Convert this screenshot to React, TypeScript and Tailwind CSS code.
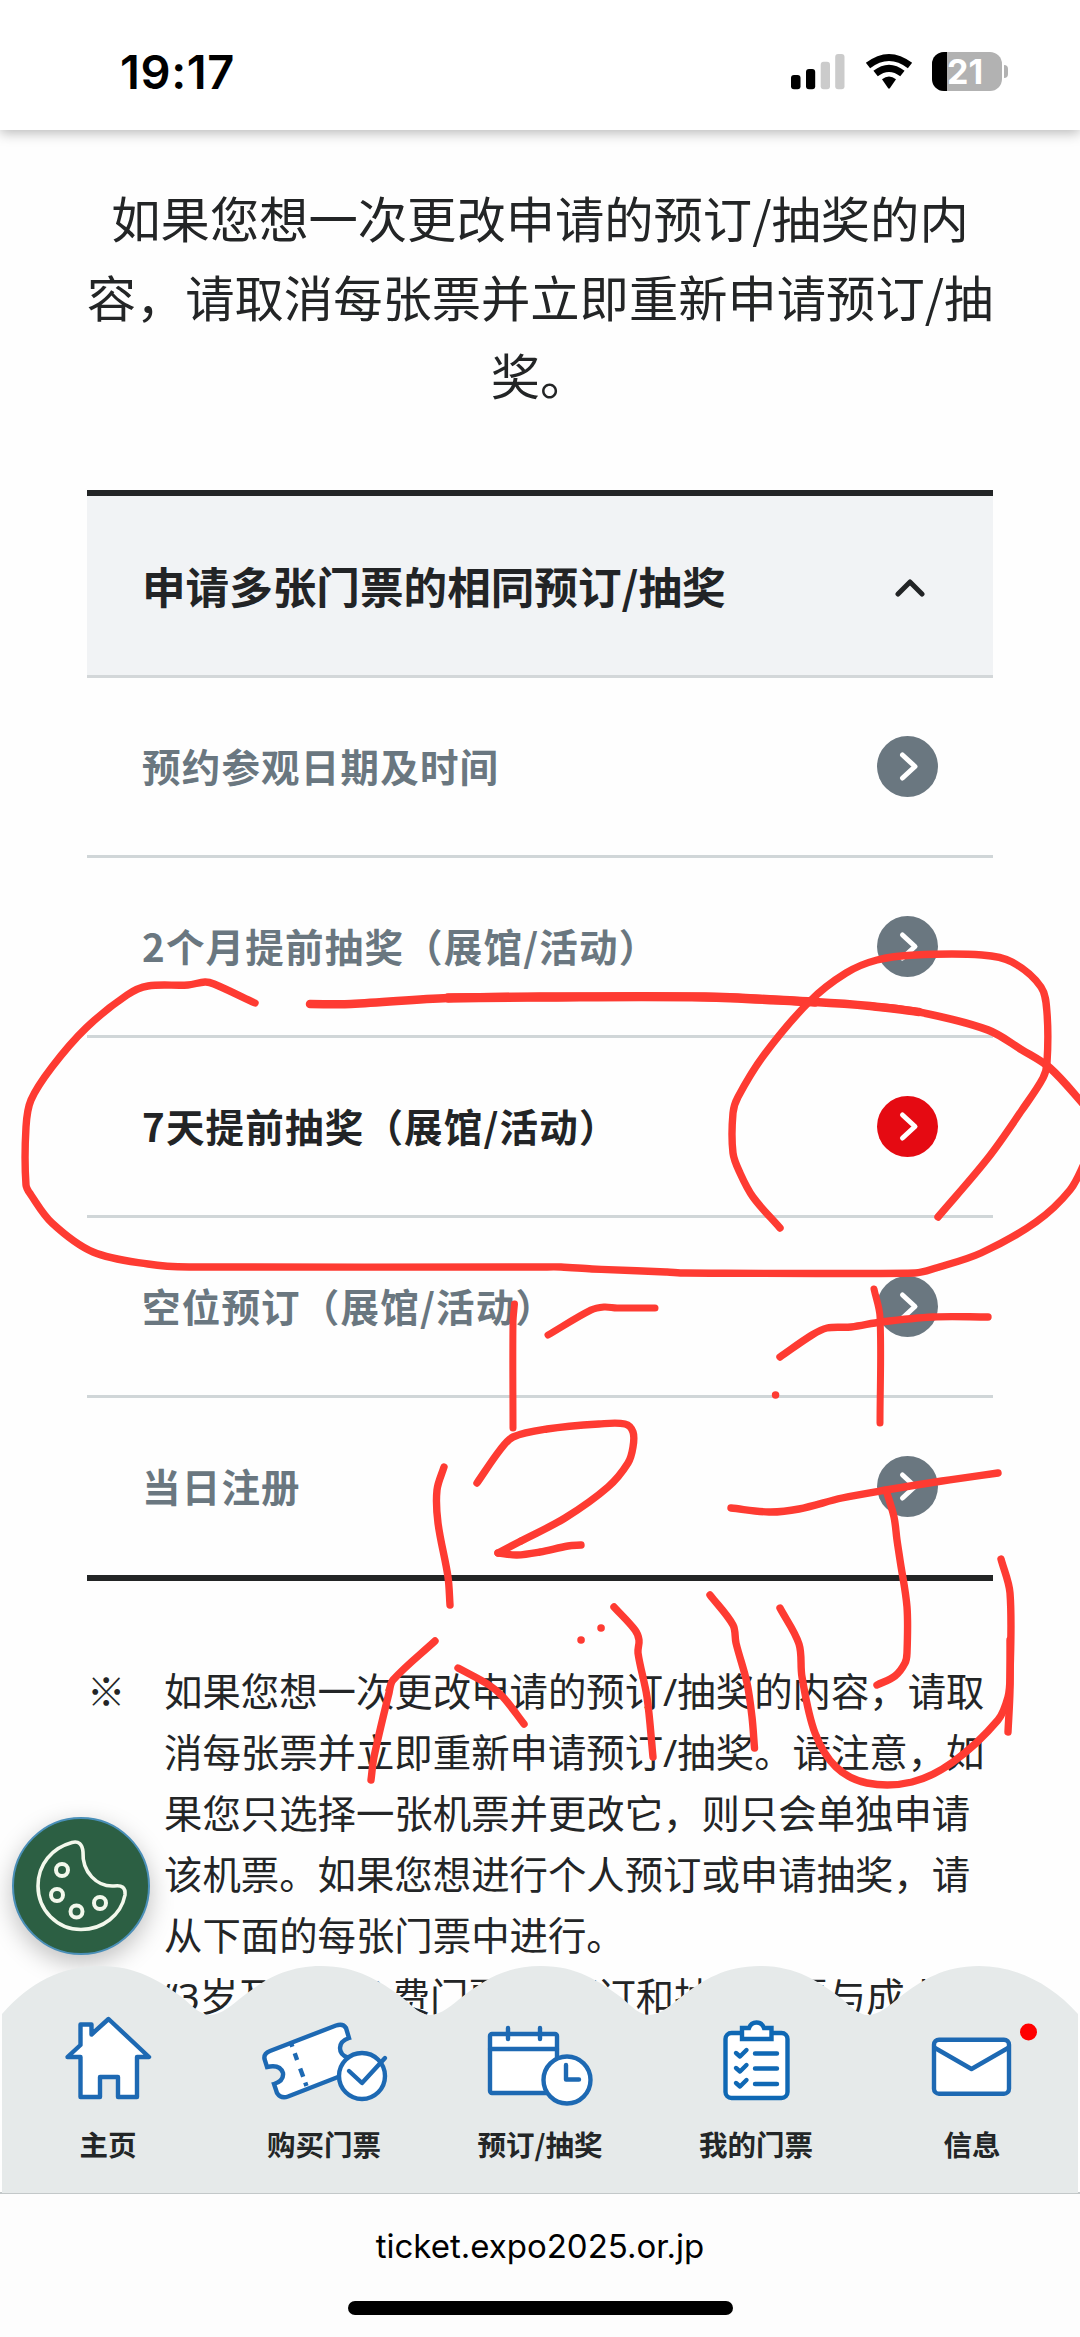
import React from 'react'

type Point = [number, number]

interface Stroke {
  width: number
  points: Point[]
}

interface MenuRow {
  label: string
  active?: boolean
}

const INTRO_LINES = [
  '如果您想一次更改申请的预订/抽奖的内',
  '容，请取消每张票并立即重新申请预订/抽',
  '奖。',
]

const MENU_ROWS: MenuRow[] = [
  { label: '预约参观日期及时间' },
  { label: '2个月提前抽奖（展馆/活动）' },
  { label: '7天提前抽奖（展馆/活动）', active: true },
  { label: '空位预订（展馆/活动）' },
  { label: '当日注册' },
]

const NOTE_LINES = [
  '如果您想一次更改申请的预订/抽奖的内容，请取',
  '消每张票并立即重新申请预订/抽奖。请注意，如',
  '果您只选择一张机票并更改它，则只会单独申请',
  '该机票。如果您想进行个人预订或申请抽奖，请',
  '从下面的每张门票中进行。',
  '“3岁及以下免费门票”的预订和抽奖门票与成人',
]

// Pen strokes drawn by hand on top of the page
const STROKES: Stroke[] = [
  {
    width: 7.4,
    points: [[255, 1003], [214, 984], [205, 982], [188, 985], [148, 986], [127, 995], [86, 1028], [52, 1067], [31, 1100], [26, 1127], [26, 1185], [31, 1195], [52, 1223], [93, 1252], [148, 1264], [189, 1267], [540, 1267], [561, 1267], [592, 1269], [667, 1272], [685, 1273], [915, 1273], [936, 1268], [981, 1253], [1036, 1222], [1070, 1190], [1086, 1160]],
  },
  { width: 8.5, points: [[310, 1004], [351, 1004], [448, 998], [540, 997], [705, 997], [815, 1002], [870, 1006], [919, 1012]] },
  { width: 9.3, points: [[448, 998], [540, 997], [705, 997], [815, 1002]] },
  { width: 7.8, points: [[870, 1006], [919, 1012], [988, 1030], [1022, 1050], [1050, 1068], [1086, 1107]] },
  {
    width: 7.4,
    points: [[938, 1217], [988, 1158], [1022, 1110], [1043, 1078], [1047, 1063], [1047, 1013], [1041, 987], [1012, 962], [982, 955], [915, 955], [877, 960], [846, 973], [809, 1002], [764, 1055], [738, 1097], [733, 1113], [733, 1153], [740, 1173], [753, 1197], [780, 1228]],
  },
  { width: 7, points: [[514.5, 1304], [513, 1323], [513, 1428]] },
  { width: 7, points: [[548, 1335], [591, 1310], [604, 1307], [617, 1308], [655, 1308]] },
  { width: 7, points: [[874, 1289], [880, 1317], [880, 1423]] },
  { width: 7.4, points: [[780, 1357], [812, 1335], [827, 1328], [851, 1327], [881, 1322], [933, 1317], [988, 1317]] },
  { width: 7.4, points: [[775.5, 1395], [775.6, 1395]] },
  {
    width: 7.4,
    points: [[477, 1483], [500, 1450], [513, 1437], [547, 1429], [599, 1424], [625, 1424], [633, 1432], [633, 1447], [628, 1463], [608, 1487], [565, 1518], [521, 1541]],
  },
  { width: 7.4, points: [[521, 1541], [498, 1553]] },
  { width: 7.4, points: [[498, 1553], [517, 1555], [540, 1552], [568, 1546], [581, 1545]] },
  { width: 7.4, points: [[444, 1467], [437, 1490], [438, 1523], [448, 1577], [450, 1605]] },
  { width: 7.4, points: [[731, 1508], [769, 1512], [799, 1509], [842, 1498], [886, 1490], [942, 1481], [998, 1473]] },
  { width: 7.4, points: [[886, 1490], [894, 1517], [897, 1540], [900, 1560], [907, 1607], [907, 1653], [905, 1663], [895, 1676], [877, 1685]] },
  { width: 7.4, points: [[435, 1641], [393, 1680], [389, 1693], [374, 1757], [371, 1780]] },
  { width: 7.4, points: [[458, 1668], [489, 1685], [503, 1697], [524, 1724]] },
  { width: 7.4, points: [[614, 1607], [635, 1630], [639, 1640], [638, 1653], [647, 1697], [653, 1757]] },
  { width: 7.4, points: [[710, 1595], [733, 1625], [736, 1643], [747, 1683], [752, 1717], [754.5, 1748]] },
  {
    width: 7.4,
    points: [[780, 1608], [799, 1644], [802, 1677], [815, 1733], [836, 1767], [867, 1783], [912, 1782], [953, 1762], [998, 1720], [1008, 1697], [1010, 1677], [1010, 1593], [1001, 1559]],
  },
  { width: 7.4, points: [[1010, 1640], [1010, 1690], [1008, 1732]] },
  { width: 7.5, points: [[581, 1640], [581.1, 1640]] },
  { width: 7.5, points: [[601, 1628], [601.1, 1628]] },
]

// Smooth curve through the points, written as cubic segments
const toPath = (pts: Point[]): string => {
  let d = `M${pts[0][0]} ${pts[0][1]}`
  const tangent = (i: number): Point => {
    const a = pts[Math.max(i - 1, 0)]
    const b = pts[Math.min(i + 1, pts.length - 1)]
    const len = Math.hypot(b[0] - a[0], b[1] - a[1]) || 1
    return [(b[0] - a[0]) / len, (b[1] - a[1]) / len]
  }
  for (let i = 0; i < pts.length - 1; i++) {
    const p = pts[i]
    const q = pts[i + 1]
    const h = Math.min(Math.hypot(q[0] - p[0], q[1] - p[1]) / 3, 60)
    const t0 = tangent(i)
    const t1 = tangent(i + 1)
    d += `C${p[0] + t0[0] * h} ${p[1] + t0[1] * h} ${q[0] - t1[0] * h} ${q[1] - t1[1] * h} ${q[0]} ${q[1]}`
  }
  return d
}

const StatusBar: React.FC = () => (
  <header className="relative z-10 flex h-[130px] shrink-0 items-start justify-between bg-white pl-[120px] pr-[72px] shadow-[0_3px_12px_rgba(0,0,0,0.28)]">
    <span className="mt-[44px] font-['Inter'] text-[47px] leading-[56px] font-semibold tracking-[0.6px] text-black">
      19:17
    </span>
    <div className="mt-[52px] flex items-start">
      <svg className="h-[39px] w-[54px]" viewBox="0 0 54 39">
        <rect x="0" y="23" width="9.5" height="14.3" rx="3" fill="#000" />
        <rect x="15" y="17" width="9.2" height="20.3" rx="3" fill="#000" />
        <rect x="29.7" y="9.7" width="9.3" height="27.6" rx="3" fill="#cbcbcb" />
        <rect x="44.2" y="2" width="9.3" height="35.3" rx="3" fill="#cbcbcb" />
      </svg>
      <svg className="ml-[20px] h-[39px] w-[48px]" viewBox="0 0 48 39">
        <g fill="none" stroke="#000" strokeWidth="7">
          <path d="M3 13.6Q24 -2.6 45 13.6" />
          <path d="M10.6 21.6Q24 11 37.4 21.6" />
        </g>
        <path d="M17 27.3Q24 21.6 31 27.3L25 36Q24 37.4 23 36Z" fill="#000" />
      </svg>
      <div className="ml-[19px] flex items-center">
        <div className="flex h-[39px] w-[70px] items-center overflow-hidden rounded-[12px] bg-[#b2b2b2]">
          <div className="h-full w-[15px] bg-black" />
          <span className="font-['Inter'] text-[34px] leading-none font-bold text-white">21</span>
        </div>
        <div className="ml-[2px] h-[13px] w-[4px] rounded-r-full bg-[#b2b2b2]" />
      </div>
    </div>
  </header>
)

const ArrowBadge: React.FC<{ active?: boolean }> = ({ active }) => (
  <svg className="h-[61px] w-[61px]" viewBox="0 0 61 61">
    <circle cx="30.5" cy="30.5" r="30.5" fill={active ? '#e50a12' : '#6a7780'} />
    <path
      d="M25.5 19L38 30.5L25.5 42"
      fill="none"
      stroke="#fff"
      strokeWidth="5"
      strokeLinecap="round"
      strokeLinejoin="round"
    />
  </svg>
)

const TicketMenu: React.FC = () => (
  <section className="mx-[87px] mt-[76px] border-y-[6px] border-[#232526]">
    <div className="flex h-[182px] items-center justify-between border-b-[3px] border-[#d3d7d9] bg-[#f1f3f5] pr-[66px] pl-[55px]">
      <h2 className="text-[43.6px] leading-none font-bold whitespace-nowrap text-[#222426]">
        申请多张门票的相同预订/抽奖
      </h2>
      <svg className="h-[22px] w-[34px]" viewBox="0 0 34 22">
        <path
          d="M5 19L17 7L29 19"
          fill="none"
          stroke="#222426"
          strokeWidth="5"
          strokeLinecap="round"
          strokeLinejoin="round"
        />
      </svg>
    </div>
    {MENU_ROWS.map((row) => (
      <div
        key={row.label}
        className="flex h-[180px] items-center justify-between border-b-[3px] border-[#d0d6d8] pr-[55px] pl-[55px] last:h-[177px] last:border-b-0"
      >
        <span
          className={
            row.active
              ? 'pb-[3px] text-[38.5px] leading-none font-bold tracking-[1.2px] whitespace-nowrap text-[#222426]'
              : 'pb-[3px] text-[38.5px] leading-none font-bold tracking-[1.2px] whitespace-nowrap text-[#6a7780]'
          }
        >
          {row.label}
        </span>
        <ArrowBadge active={row.active} />
      </div>
    ))}
  </section>
)

const CookieButton: React.FC = () => (
  <button className="absolute top-[1687px] left-[12px] h-[138px] w-[138px] rounded-full border-2 border-[#4a8fb8] bg-[#2c5f43] shadow-[0_8px_24px_rgba(0,0,0,0.25)]">
    <svg className="-m-[2px] h-[138px] w-[138px]" viewBox="0 0 138 138" fill="none" stroke="#f3f8ec">
      <path
        strokeWidth="3.6"
        d="M60 25.5Q70 23 71 35C70 55 85 70 102 69Q114 67 113 78C109 98 91 112.5 69 112.5C45 112.5 26 93 26 69C26 47 40 31 60 25.5Z"
      />
      <g strokeWidth="4">
        <circle cx="50" cy="53" r="6" />
        <circle cx="45" cy="78" r="6" />
        <circle cx="64.5" cy="94.5" r="6" />
        <circle cx="88" cy="86" r="6" />
      </g>
    </svg>
  </button>
)

const NavIcon: React.FC<{ children: React.ReactNode }> = ({ children }) => (
  <svg
    className="h-[100px] w-[216px]"
    viewBox="0 0 216 100"
    fill="#fff"
    stroke="#1d69b3"
    strokeWidth="4.4"
    strokeLinejoin="round"
    strokeLinecap="round"
  >
    {children}
  </svg>
)

const NAV_ITEMS: { label: string; icon: React.ReactNode }[] = [
  {
    label: '主页',
    icon: (
      <path d="M108.5 9L149 47H137V87H118V67H100V87H80.5V47H67.5L80.5 35V14.5H91.5V24.5Z" />
    ),
  },
  {
    label: '购买门票',
    icon: (
      <>
        <path
          strokeLinejoin="miter"
          d="M54 41L120 15.5Q127 13 130 18L133 28Q124 31 124 38Q124 45 132 47.5L140 60L72 86.5Q65 89 61 83L58 74Q68 71 67 63Q64 54 51 57L48.5 49Q47.5 43.5 54 41Z"
        />
        <path strokeLinecap="butt" strokeDasharray="4 7 7 9 9 6 4 99" d="M75 33L90.5 76" />
        <circle cx="146" cy="66" r="23" />
        <path fill="none" d="M133 61L146 73L169 48" />
      </>
    ),
  },
  {
    label: '预订/抽奖',
    icon: (
      <>
        <rect x="58" y="24" width="67" height="59" rx="2" />
        <path d="M58 39H125M76 18V29M108 18V29" />
        <circle cx="135" cy="70" r="23.5" />
        <path fill="none" d="M134 55V69.5H147" />
      </>
    ),
  },
  {
    label: '我的门票',
    icon: (
      <g stroke="#0f68b4">
        <rect x="77.5" y="23" width="62" height="65" rx="6" />
        <path strokeLinejoin="miter" d="M94 29V18H101Q103 12.5 108.5 12.5Q114 12.5 116 18H123.5V29Z" />
        <path fill="none" d="M88 43L92 46.5L98.5 40M88 58L92 61.5L98.5 55M88 73L92 76.5L98.5 70" />
        <path d="M107 43.5H129M107 58.5H129M107 74H129" />
      </g>
    ),
  },
  {
    label: '信息',
    icon: (
      <>
        <rect x="70" y="29.7" width="75" height="54" rx="5" />
        <path fill="none" d="M71 38L107.5 59L144 38" />
        <circle cx="164.5" cy="22" r="8.5" fill="#f00" stroke="none" />
      </>
    ),
  },
]

const BottomNav: React.FC = () => (
  <nav className="relative -mt-[49px] h-[228px] shrink-0 border-b-2 border-[#c3c8c9]">
    <svg className="absolute inset-0 h-[227px] w-full" viewBox="0 0 1080 227" fill="#e6eaea">
      <path d="M2 48C30 16 62 0 100 0C137 0 160 15 183 32C193 41 201 49 210 49C221 49 232 39 242 31C264 14 286 0 321 0C357 0 380 15 403 32C413 41 421 49 430 49C441 49 452 39 462 31C484 14 506 0 541 0C577 0 599 15 622 32C632 41 640 49 649 49C660 49 671 39 681 31C703 14 725 0 760 0C796 0 818 15 841 32C851 41 859 49 868 49C879 49 890 39 900 31C922 14 944 0 979 0C1017 0 1052 19 1078 48V227H2Z" />
    </svg>
    <ul className="relative grid grid-cols-5 pt-[44px]">
      {NAV_ITEMS.map((item) => (
        <li key={item.label} className="flex flex-col items-center">
          <NavIcon>{item.icon}</NavIcon>
          <span className="mt-[14px] text-[28.5px] leading-[40px] font-bold whitespace-nowrap text-[#232627]">
            {item.label}
          </span>
        </li>
      ))}
    </ul>
  </nav>
)

const PenStrokes: React.FC = () => (
  <svg
    className="pointer-events-none absolute inset-0 z-20 h-[2337px] w-[1080px]"
    viewBox="0 0 1080 2337"
    fill="none"
    stroke="#fe3b32"
    strokeLinecap="round"
    strokeLinejoin="round"
  >
    {STROKES.map((stroke, i) => (
      <path key={i} d={toPath(stroke.points)} strokeWidth={stroke.width} />
    ))}
  </svg>
)

const App: React.FC = () => {
  return (
    <div className="relative flex h-[2337px] w-[1080px] flex-col overflow-hidden bg-[#fefefe] font-['Noto_Sans_CJK_SC',sans-serif]">
      <StatusBar />

      <main className="relative h-[1885px] shrink-0 overflow-hidden">
        <p className="pt-[48px] text-center text-[49.3px] leading-[78.7px] text-[#232526]">
          {INTRO_LINES.map((line) => (
            <span key={line} className="block whitespace-nowrap">
              {line}
            </span>
          ))}
        </p>

        <TicketMenu />

        <div className="mt-[78px] flex pl-[87px] text-[38.4px] leading-[61px] text-[#232526]">
          <span className="w-[77px] shrink-0">※</span>
          {/* Noto Sans first, so the curly quotes stay narrow */}
          <p className="pt-[2px] font-['Noto_Sans','Noto_Sans_CJK_SC',sans-serif]">
            {NOTE_LINES.map((line) => (
              <span key={line} className="block h-[61px] whitespace-nowrap">
                {line}
              </span>
            ))}
          </p>
        </div>

        <CookieButton />
      </main>

      <BottomNav />

      {/* Browser address bar and home indicator */}
      <footer className="flex flex-1 flex-col items-center bg-[#fdfdfd]">
        <span className="mt-[30px] font-['Inter'] text-[33px] leading-[44px] text-black">
          ticket.expo2025.or.jp
        </span>
        <div className="mt-[33px] h-[14px] w-[385px] rounded-full bg-black" />
      </footer>

      <PenStrokes />
    </div>
  )
}

export default App
